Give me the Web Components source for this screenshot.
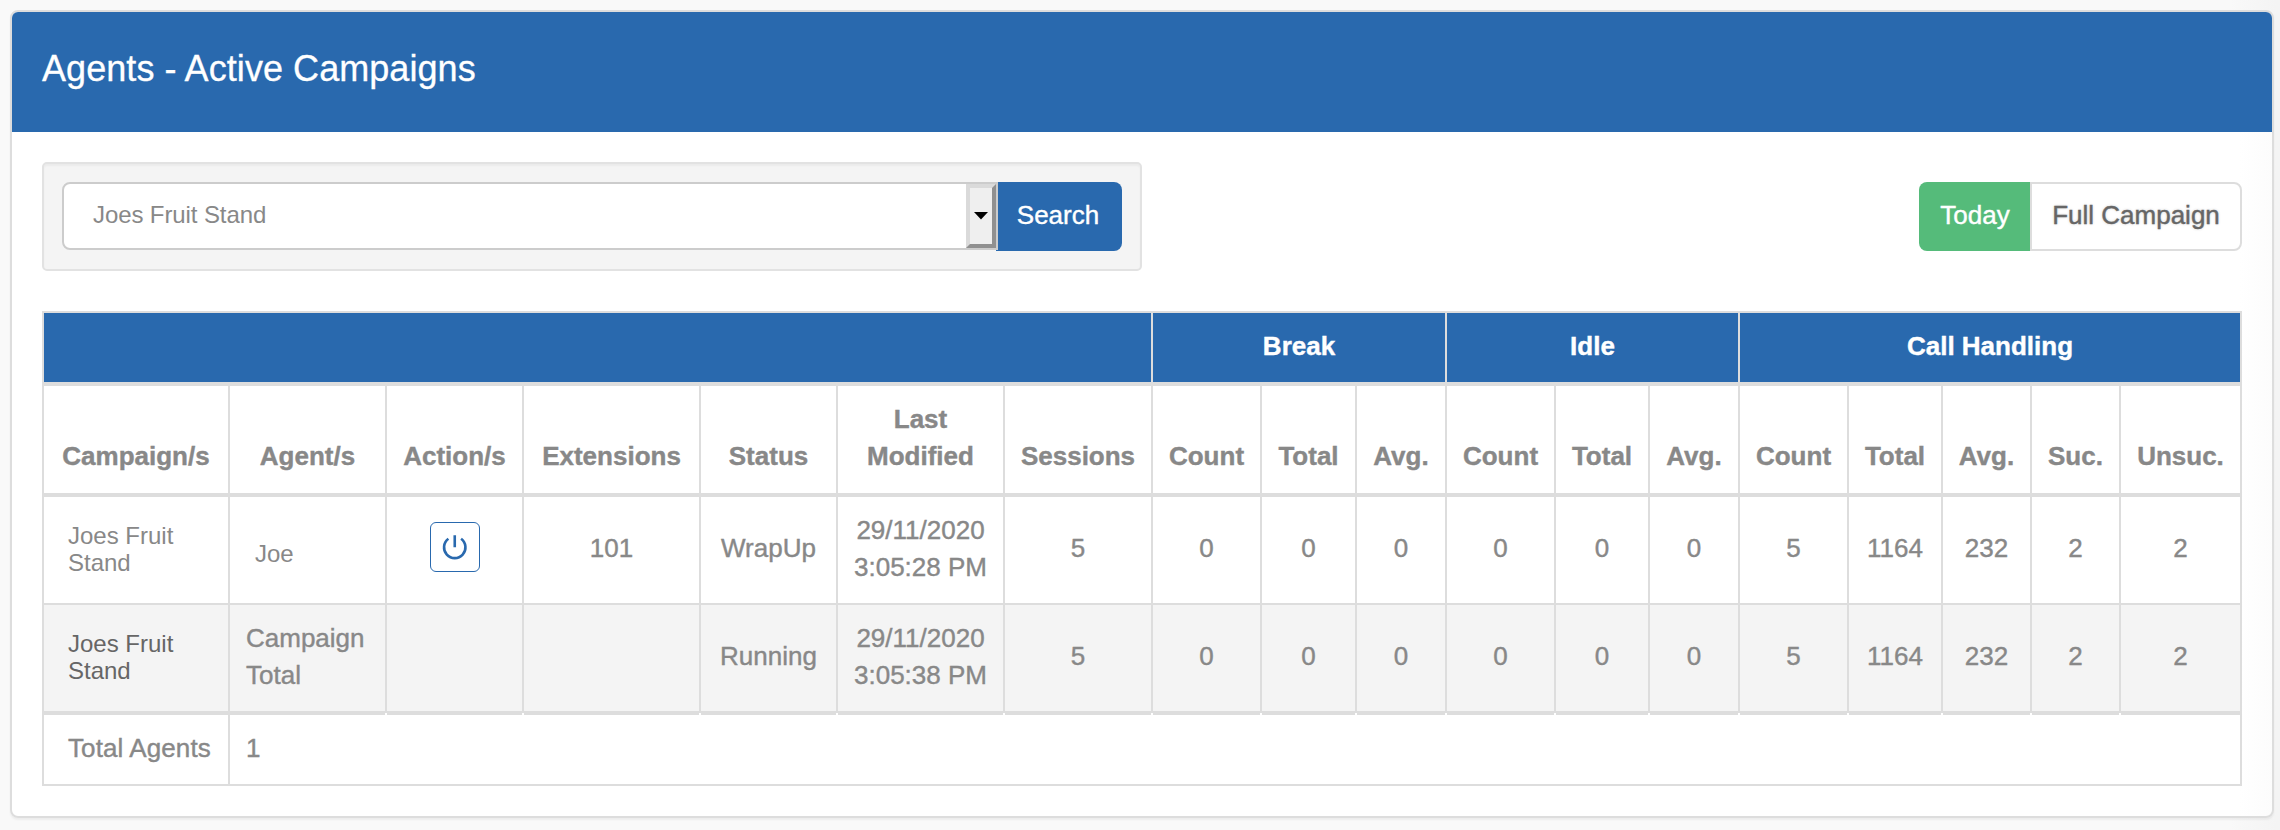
<!DOCTYPE html>
<html lang="en">
<head>
<meta charset="utf-8">
<title>Agents - Active Campaigns</title>
<style>
  body {
    margin: 0;
    height: 830px;
    overflow: hidden;
    background: linear-gradient(90deg, #f9f9f9 2230px, #f4f4f4 2276px);
    font-family: "Liberation Sans", Arial, sans-serif;
    font-size: 26px;
    line-height: 37px;
    color: #888;
  }
</style>
</head>
<body>
<ui-panel heading="Agents - Active Campaigns">
  <tool-bar>
    <search-well><combo-box value="Joes Fruit Stand"></combo-box></search-well>
    <range-toggle slot="end"></range-toggle>
  </tool-bar>
  <agent-table></agent-table>
</ui-panel>

<script>
const define = (name, html, setup) => customElements.define(name, class extends HTMLElement {
  connectedCallback() {
    if (this.shadowRoot) return;
    this.attachShadow({ mode: 'open' }).innerHTML = html;
    if (setup) setup(this, this.shadowRoot);
  }
});

define('ui-panel', `
<style>
  :host { display: block; box-sizing: border-box; width: 2264px; height: 808px; margin: 10px 0 0 10px;
    border: 2px solid #ddd; border-radius: 8px; overflow: hidden;
    background: linear-gradient(90deg, #fff 2228px, #fcfcfc 2262px);
    box-shadow: 0 2px 2px rgba(0,0,0,.05); }
  header { box-sizing: border-box; height: 120px; padding: 35px 30px 0; background: #2969ae;
    color: #fff; font-size: 36px; line-height: 43px; letter-spacing: .06px; -webkit-text-stroke: .3px; }
  main { padding: 30px; }
</style>
<header></header><main><slot></slot></main>`,
(el, root) => { root.querySelector('header').textContent = el.getAttribute('heading'); });

define('tool-bar', `
<style>
  :host { display: flex; justify-content: space-between; height: 149px; }
  .end { padding-top: 20px; }
</style>
<slot></slot><div class="end"><slot name="end"></slot></div>`);

define('search-well', `
<style>
  :host { display: flex; box-sizing: border-box; width: 1100px; height: 109px; padding: 18px;
    border: 2px solid #e2e2e2; border-radius: 5px; background: #f4f4f4;
    box-shadow: inset 0 2px 2px rgba(0,0,0,.04); }
  button { width: 126px; height: 69px; margin-left: -2px; padding: 0 2px 3px 0; border: 0;
    border-radius: 0 8px 8px 0; background: #2969ae; color: #fff; font: inherit; -webkit-text-stroke: .4px; }
</style>
<slot></slot><button>Search</button>`);

define('combo-box', `
<style>
  :host { display: flex; box-sizing: border-box; position: relative; z-index: 1; width: 936px; height: 68px;
    border: 2px solid #ccc; border-radius: 8px 0 0 8px; background: #fff; }
  .value { flex: 1; padding-left: 29px; font-size: 24px; line-height: 61px; letter-spacing: -.1px; }
  .drop { box-sizing: border-box; display: flex; align-items: center; justify-content: center;
    width: 30px; height: 64px; border: 4px solid; border-color: #dadada #909090 #909090 #dadada; background: #efefef; }
  svg { display: block; }
</style>
<span class="value"></span>
<span class="drop"><svg width="14" height="8" viewBox="0 0 14 8"><path d="M0 0h14L7 7.6z" fill="#000"/></svg></span>`,
(el, root) => { root.querySelector('.value').textContent = el.getAttribute('value'); });

define('range-toggle', `
<style>
  :host { display: flex; height: 69px; }
  button { box-sizing: border-box; margin: 0; padding: 0 0 3px; font: inherit; -webkit-text-stroke: .4px; }
  .on { width: 111px; padding-left: 1px; border: 0; border-radius: 8px 0 0 8px; background: #55bb7a; color: #fff; }
  .off { width: 212px; border: 2px solid #ddd; border-radius: 0 8px 8px 0; background: #fff; color: #666;
    text-shadow: 0 0 3px rgba(0,0,0,.2); }
</style>
<button class="on">Today</button><button class="off">Full Campaign</button>`);

define('power-button', `
<style>
  :host { display: block; box-sizing: border-box; width: 50px; height: 50px; border: 1px solid #2969ae;
    border-radius: 6px; background: #fff; }
  svg { display: block; }
</style>
<svg width="48" height="48" viewBox="0 0 48 48" fill="none" stroke="#2969ae" stroke-width="2.6">
  <path d="M17.4 15.8A10.7 10.7 0 1 0 30.1 15.8M23.75 12.2V24.2"/>
</svg>`);

define('agent-table', `
<style>
  :host { display: grid; box-sizing: border-box; width: 2200px; border: solid #ddd; border-width: 2px 2px 2px 0;
    grid-template-columns: 186px 157px 137px 177px 137px 167px 148px 109px 95px 90px 109px 94px 90px 109px 94px 89px 89px 121px;
    grid-template-rows: 73px 111px 108px 110px 69px; }
  .c { box-sizing: border-box; display: flex; align-items: center; justify-content: center; text-align: center;
    border-left: 2px solid #ddd; padding-bottom: 3px; -webkit-text-stroke: .4px; }
  .group { background: #2969ae; background-clip: padding-box; color: #fff; font-weight: bold; border-bottom: 4px solid #ddd; }
  .head { align-items: flex-end; padding-bottom: 18px; font-weight: bold; border-bottom: 4px solid #ddd; }
  .r1 { border-bottom: 2px solid #ddd; }
  .r2 { background: #f4f4f4; border-bottom: 4px solid #ddd; }
  .left { justify-content: flex-start; text-align: left; padding-left: 16px; }
  .name { padding-left: 24px; font-size: 24px; line-height: 27px; -webkit-text-stroke: 0; }
  .name.r2 { color: #666; }
  .joe { padding: 6px 0 0 25px; font-size: 24px; line-height: 27px; -webkit-text-stroke: 0; }
  .total { padding-left: 24px; letter-spacing: .1px; }
  .action { padding: 0 0 6px 1px; }
  .notch { position: relative; }
  .notch::after { content: ""; position: absolute; left: -2px; bottom: -4px; width: 2px; height: 2px; background: #fff; }
</style>`,
(el, root) => {
  const cell = (text, cls = '', span = 1) => {
    const d = document.createElement('div');
    d.className = 'c ' + cls;
    d.style.gridColumn = 'span ' + span;
    const s = document.createElement('span');
    text.split('|').forEach((line, i) => {
      if (i) s.append(document.createElement('br'));
      s.append(line);
    });
    d.append(s);
    root.append(d);
    return d;
  };
  [['', 7], ['Break', 3], ['Idle', 3], ['Call Handling', 5]].forEach(([t, n]) => cell(t, 'group', n));
  ['Campaign/s', 'Agent/s', 'Action/s', 'Extensions', 'Status', 'Last|Modified', 'Sessions',
   'Count', 'Total', 'Avg.', 'Count', 'Total', 'Avg.', 'Count', 'Total', 'Avg.', 'Suc.', 'Unsuc.']
    .forEach(t => cell(t, 'head'));
  const stats = ['5', '0', '0', '0', '0', '0', '0', '5', '1164', '232', '2', '2'];
  cell('Joes Fruit|Stand', 'r1 left name');
  cell('Joe', 'r1 left joe');
  cell('', 'r1 action').replaceChildren(document.createElement('power-button'));
  ['101', 'WrapUp', '29/11/2020|3:05:28 PM', ...stats].forEach(t => cell(t, 'r1'));
  cell('Joes Fruit|Stand', 'r2 left name');
  cell('Campaign|Total', 'r2 left');
  ['', '', 'Running', '29/11/2020|3:05:38 PM', ...stats].forEach(t => cell(t, 'r2 notch'));
  cell('Total Agents', 'left total');
  cell('1', 'left', 17);
});
</script>
</body>
</html>
